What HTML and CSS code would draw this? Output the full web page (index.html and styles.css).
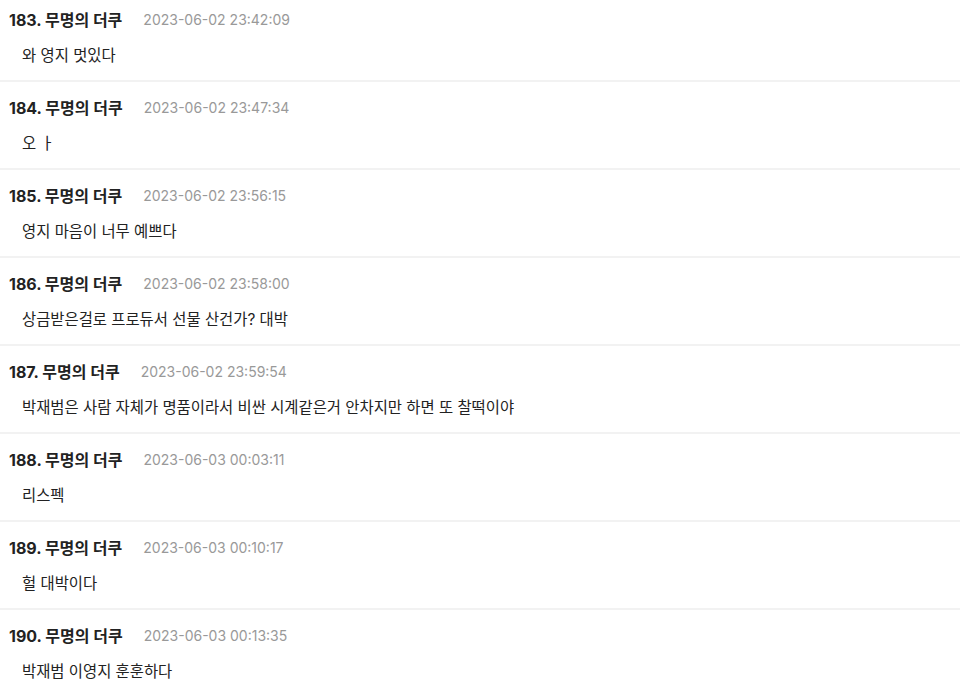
FILE: index.html
```html
<!DOCTYPE html>
<html lang="ko">
<head>
    <meta charset="UTF-8">
    <title>댓글</title>
    <link rel="stylesheet" href="styles.css">
</head>
<body>
    <ul class="comments">
        <li class="comment">
            <div class="comment-head"><span class="nick">183. 무명의 더쿠</span><span class="date">2023-06-02 23:42:09</span></div>
            <p class="comment-body">와 영지 멋있다</p>
        </li>
        <li class="comment">
            <div class="comment-head"><span class="nick">184. 무명의 더쿠</span><span class="date">2023-06-02 23:47:34</span></div>
            <p class="comment-body">오 ㅏ</p>
        </li>
        <li class="comment">
            <div class="comment-head"><span class="nick">185. 무명의 더쿠</span><span class="date">2023-06-02 23:56:15</span></div>
            <p class="comment-body">영지 마음이 너무 예쁘다</p>
        </li>
        <li class="comment">
            <div class="comment-head"><span class="nick">186. 무명의 더쿠</span><span class="date">2023-06-02 23:58:00</span></div>
            <p class="comment-body">상금받은걸로 프로듀서 선물 산건가? 대박</p>
        </li>
        <li class="comment">
            <div class="comment-head"><span class="nick">187. 무명의 더쿠</span><span class="date">2023-06-02 23:59:54</span></div>
            <p class="comment-body">박재범은 사람 자체가 명품이라서 비싼 시계같은거 안차지만 하면 또 찰떡이야</p>
        </li>
        <li class="comment">
            <div class="comment-head"><span class="nick">188. 무명의 더쿠</span><span class="date">2023-06-03 00:03:11</span></div>
            <p class="comment-body">리스펙</p>
        </li>
        <li class="comment">
            <div class="comment-head"><span class="nick">189. 무명의 더쿠</span><span class="date">2023-06-03 00:10:17</span></div>
            <p class="comment-body">헐 대박이다</p>
        </li>
        <li class="comment">
            <div class="comment-head"><span class="nick">190. 무명의 더쿠</span><span class="date">2023-06-03 00:13:35</span></div>
            <p class="comment-body">박재범 이영지 훈훈하다</p>
        </li>
    </ul>
</body>
</html>
```

FILE: styles.css
```css
* { box-sizing: border-box; }
body {
    margin: 0;
    background-color: #ffffff;
    color: #222;
    font-family: "Inter", "Noto Sans CJK KR", sans-serif;
}
.comments {
    list-style: none;
    margin: -6px 0 0 0;
    padding: 0;
}
.comment {
    height: 88px;
    padding: 14px 9px 0 9px;
    border-bottom: 2px solid #f2f2f2;
}
.comment-head {
    display: flex;
    align-items: center;
    gap: 21px;
    height: 22px;
}
.nick {
    font-size: 16px;
    font-weight: 700;
    color: #222;
}
.date {
    font-size: 14px;
    color: #999;
}
.comment-body {
    margin: 15px 0 0 13px;
    font-size: 15.4px;
    line-height: 22px;
    color: #222;
}
```
